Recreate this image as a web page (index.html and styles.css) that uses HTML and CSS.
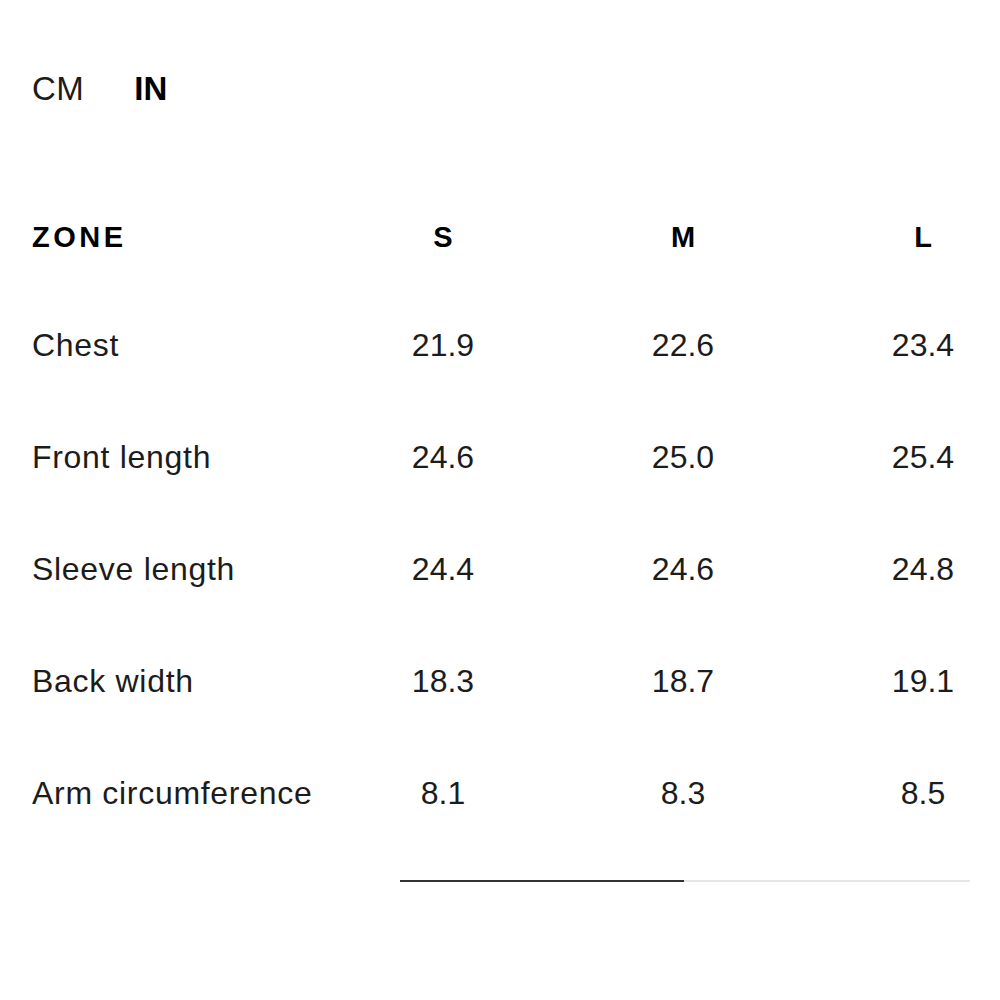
FILE: index.html
```html
<!DOCTYPE html>
<html lang="en">
<head>
<meta charset="utf-8">
<title>Size guide</title>
<link rel="stylesheet" href="styles.css">
</head>
<body>
<main class="guide">
  <div class="units">
    <span class="unit">CM</span>
    <span class="unit unit-active">IN</span>
  </div>
  <div class="table-wrap">
    <div class="size-table">
      <div class="cell head label">ZONE</div>
      <div class="cell head">S</div>
      <div class="cell head">M</div>
      <div class="cell head">L</div>

      <div class="cell label">Chest</div>
      <div class="cell">21.9</div>
      <div class="cell">22.6</div>
      <div class="cell">23.4</div>

      <div class="cell label">Front length</div>
      <div class="cell">24.6</div>
      <div class="cell">25.0</div>
      <div class="cell">25.4</div>

      <div class="cell label">Sleeve length</div>
      <div class="cell">24.4</div>
      <div class="cell">24.6</div>
      <div class="cell">24.8</div>

      <div class="cell label">Back width</div>
      <div class="cell">18.3</div>
      <div class="cell">18.7</div>
      <div class="cell">19.1</div>

      <div class="cell label">Arm circumference</div>
      <div class="cell">8.1</div>
      <div class="cell">8.3</div>
      <div class="cell">8.5</div>
    </div>
  </div>
  <div class="scroll-track"><div class="scroll-thumb"></div></div>
</main>
</body>
</html>
```
FILE: styles.css
```css
* { box-sizing: border-box; }
html, body {
  margin: 0;
  padding: 0;
  background: #ffffff;
}
body {
  font-family: "Liberation Sans", Arial, sans-serif;
  color: #1c1c1c;
}
.guide {
  padding: 69px 0 0 32px;
  width: 1000px;
  overflow: hidden;
}
.units {
  display: flex;
  gap: 50px;
  height: 40px;
  align-items: center;
  font-size: 33px;
  line-height: 40px;
}
.unit {
  font-weight: 400;
  color: #1c1c1c;
  letter-spacing: 0.5px;
}
.unit-active {
  font-weight: 700;
  color: #000;
  letter-spacing: 0;
}
.table-wrap {
  margin-top: 76px;
}
.size-table {
  display: grid;
  grid-template-columns: 291px 240px 240px 240px;
  grid-template-rows: 104px repeat(5, 112px);
}
.cell {
  display: flex;
  align-items: center;
  justify-content: center;
  font-size: 32px;
  white-space: nowrap;
}
.cell.label {
  justify-content: flex-start;
  letter-spacing: 0.7px;
}
.cell.head {
  font-size: 29px;
  font-weight: 700;
  color: #000;
}
.cell.head.label {
  letter-spacing: 3.5px;
}
.scroll-track {
  margin: 31px 0 0 368px;
  width: 570px;
  height: 2px;
  background: #e6e6e6;
}
.scroll-thumb {
  width: 284px;
  height: 2px;
  background: #333333;
}
```
